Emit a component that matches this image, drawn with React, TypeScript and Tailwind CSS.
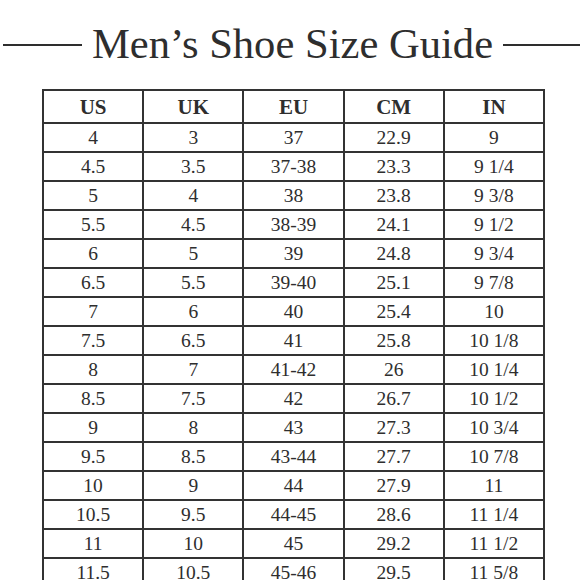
import React from "react";

const rows: string[][] = [
  ["4", "3", "37", "22.9", "9"],
  ["4.5", "3.5", "37-38", "23.3", "9 1/4"],
  ["5", "4", "38", "23.8", "9 3/8"],
  ["5.5", "4.5", "38-39", "24.1", "9 1/2"],
  ["6", "5", "39", "24.8", "9 3/4"],
  ["6.5", "5.5", "39-40", "25.1", "9 7/8"],
  ["7", "6", "40", "25.4", "10"],
  ["7.5", "6.5", "41", "25.8", "10 1/8"],
  ["8", "7", "41-42", "26", "10 1/4"],
  ["8.5", "7.5", "42", "26.7", "10 1/2"],
  ["9", "8", "43", "27.3", "10 3/4"],
  ["9.5", "8.5", "43-44", "27.7", "10 7/8"],
  ["10", "9", "44", "27.9", "11"],
  ["10.5", "9.5", "44-45", "28.6", "11 1/4"],
  ["11", "10", "45", "29.2", "11 1/2"],
  ["11.5", "10.5", "45-46", "29.5", "11 5/8"],
];

const heads = ["US", "UK", "EU", "CM", "IN"];

export default function App() {
  return (
    <div
      className="w-[580px] h-[580px] overflow-hidden bg-white text-[#2e2e2e]"
      style={{ fontFamily: '"Liberation Serif", "Times New Roman", serif' }}
    >
      <div className="h-[89px] flex items-center">
        <div className="ml-[3px] w-[79px] h-[2px] bg-[#2e2e2e]" />
        <div className="mx-[10px] text-[42.6px] leading-none whitespace-nowrap">
          Men’s Shoe Size Guide
        </div>
        <div className="flex-1 h-[2px] bg-[#2e2e2e]" />
      </div>
      <div className="pl-[42px]">
        <table className="border-collapse w-[503px] table-fixed">
          <thead>
            <tr>
              {heads.map((h) => (
                <th
                  key={h}
                  className="border-2 border-[#333] h-[33px] p-0 pt-[2px] text-[21px] font-bold text-center align-middle leading-none"
                >
                  {h}
                </th>
              ))}
            </tr>
          </thead>
          <tbody>
            {rows.map((r, i) => (
              <tr key={i}>
                {r.map((c, j) => (
                  <td
                    key={j}
                    className="border-2 border-[#333] h-[29px] p-0 text-[19.5px] text-center align-middle leading-none"
                  >
                    {c}
                  </td>
                ))}
              </tr>
            ))}
          </tbody>
        </table>
      </div>
    </div>
  );
}
